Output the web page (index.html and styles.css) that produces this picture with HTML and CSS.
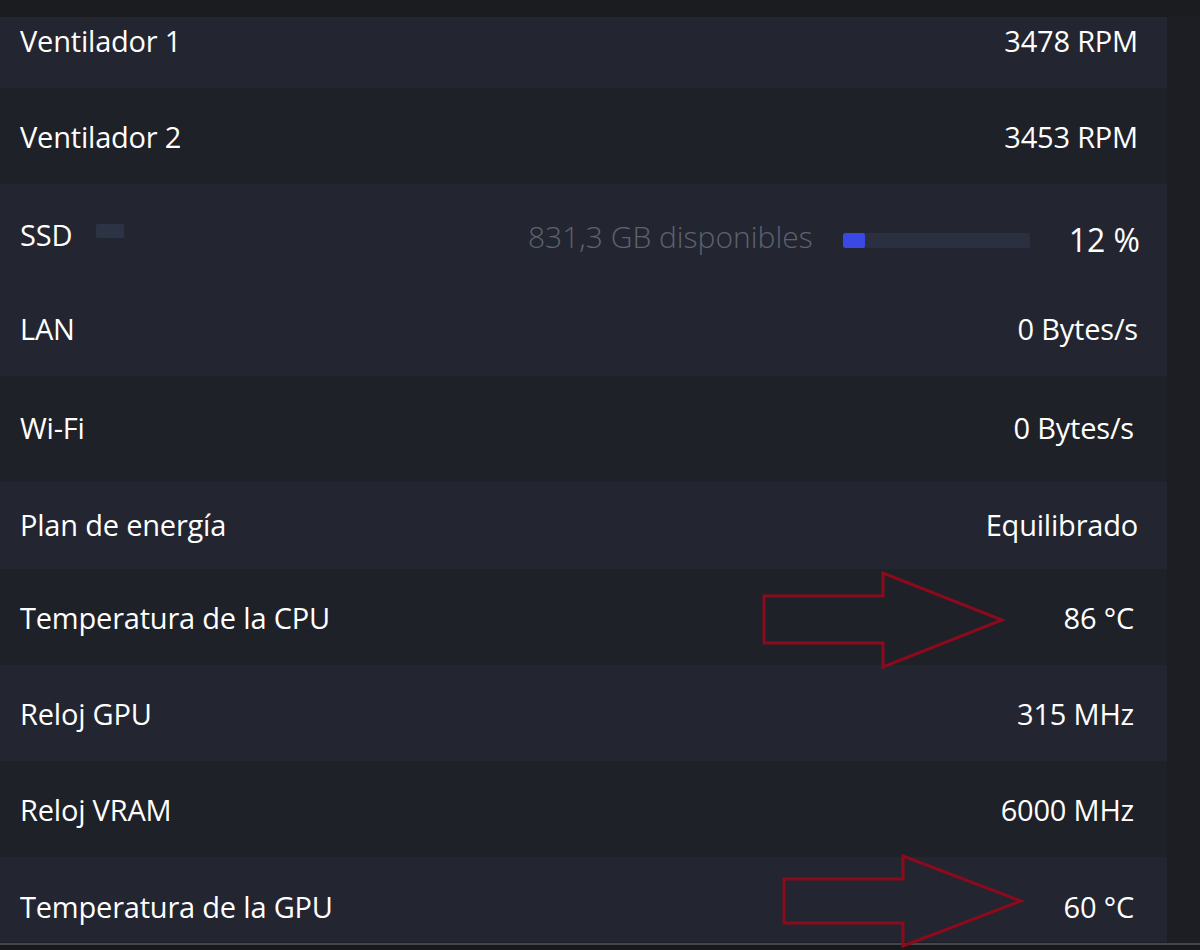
FILE: index.html
```html
<!DOCTYPE html>
<html lang="es">
<head>
    <meta charset="UTF-8">
    <meta name="viewport" content="width=device-width, initial-scale=1.0">
    <title>Monitor del sistema</title>
    <link rel="stylesheet" href="styles.css">
</head>
<body>
    <div class="screen">
        <div class="topbar"></div>

        <div class="viewport">
            <div class="panel">
                <div class="stat-list">
                    <div class="stat-row light">
                        <span class="stat-label">Ventilador 1</span>
                        <span class="stat-value">3478 RPM</span>
                    </div>
                    <div class="stat-row dark">
                        <span class="stat-label">Ventilador 2</span>
                        <span class="stat-value">3453 RPM</span>
                    </div>
                    <div class="stat-row light">
                        <div class="disk-label">
                            <span class="stat-label">SSD</span>
                            <span class="disk-chip"></span>
                        </div>
                        <div class="disk-usage">
                            <span class="disk-free">831,3 GB disponibles</span>
                            <div class="usage-bar">
                                <div class="usage-fill" style="width: 12%;"></div>
                            </div>
                            <span class="usage-percent">12 %</span>
                        </div>
                    </div>
                    <div class="stat-row light">
                        <span class="stat-label">LAN</span>
                        <span class="stat-value">0 Bytes/s</span>
                    </div>
                    <div class="stat-row dark tall">
                        <span class="stat-label">Wi-Fi</span>
                        <span class="stat-value inset">0 Bytes/s</span>
                    </div>
                    <div class="stat-row light short">
                        <span class="stat-label">Plan de energía</span>
                        <span class="stat-value">Equilibrado</span>
                    </div>
                    <div class="stat-row dark">
                        <span class="stat-label">Temperatura de la CPU</span>
                        <span class="stat-value inset">86 °C</span>
                    </div>
                    <div class="stat-row light">
                        <span class="stat-label">Reloj GPU</span>
                        <span class="stat-value inset">315 MHz</span>
                    </div>
                    <div class="stat-row dark">
                        <span class="stat-label">Reloj VRAM</span>
                        <span class="stat-value inset">6000 MHz</span>
                    </div>
                    <div class="stat-row light last">
                        <span class="stat-label">Temperatura de la GPU</span>
                        <span class="stat-value inset">60 °C</span>
                    </div>
                </div>
                <div class="panel-gutter"></div>
            </div>
        </div>

        <div class="bottombar"></div>

        <!-- annotation arrows drawn over the screenshot -->
        <svg class="annotations" width="1200" height="950" viewBox="0 0 1200 950">
            <polygon points="764,596 883,596 883,573 1002,620 883,667 883,643 764,643" />
            <polygon points="784,879 903,879 903,856 1021,901 903,946 903,923 784,923" />
        </svg>
    </div>
</body>
</html>
```

FILE: styles.css
```css
:root {
    --row-light: #232631;
    --row-dark: #1f2129;
    --gutter: #1c1e23;
    --topbar: #1b1c20;
    --text: #ffffff;
    --text-muted: #5c626e;
    --bar-track: #2a3040;
    --bar-fill: #3a48e4;
    --arrow: #8b0a1c;
}

* {
    margin: 0;
    padding: 0;
    box-sizing: border-box;
}

body {
    background-color: var(--gutter);
    font-family: "Open Sans", "Noto Sans", sans-serif;
    color: var(--text);
}

.screen {
    position: relative;
    width: 1200px;
    height: 950px;
    display: flex;
    flex-direction: column;
    overflow: hidden;
}

.topbar {
    height: 17px;
    background: var(--topbar);
}

.viewport {
    height: 926px;
    overflow: hidden;
}

/* list is scrolled a little, so the first row is cut */
.panel {
    display: flex;
    margin-top: -25px;
}

.stat-list {
    width: 1167px;
    display: flex;
    flex-direction: column;
}

.panel-gutter {
    flex: 1;
    background: var(--gutter);
}

.stat-row {
    height: 96px;
    padding: 0 29px 0 20px;
    display: flex;
    justify-content: space-between;
    align-items: center;
}

.stat-row.light { background: var(--row-light); }
.stat-row.dark { background: var(--row-dark); }
.stat-row.tall { height: 106px; padding-top: 0; padding-bottom: 4px; }
.stat-row.short { height: 87px; padding-bottom: 2px; }
.stat-row.last { height: 85px; padding-top: 14px; }

.stat-label,
.stat-value {
    font-size: 29px;
    letter-spacing: -0.2px;
    line-height: 1;
}

.stat-value.inset {
    margin-right: 4px;
}

.disk-label {
    display: flex;
    align-items: flex-start;
    gap: 24px;
    margin-top: 4px;
}

.disk-chip {
    width: 28px;
    height: 14px;
    margin-top: 4px;
    border-radius: 2px;
    background: #2b3345;
}

.disk-usage {
    display: flex;
    align-items: center;
    margin-top: 16px;
    margin-right: -2px;
}

.disk-free {
    font-size: 30px;
    font-weight: 300;
    color: var(--text-muted);
    margin-right: 30px;
    margin-top: -8px;
}

.usage-bar {
    width: 187px;
    height: 15px;
    background: var(--bar-track);
    border-radius: 2px;
    overflow: hidden;
    margin-right: 39px;
}

.usage-fill {
    height: 100%;
    background: var(--bar-fill);
    border-radius: 2px;
}

.usage-percent {
    font-size: 32px;
    line-height: 1;
}

.bottombar {
    flex: 1;
    border-top: 2px solid #44454a;
    background: #17181b;
}

.annotations {
    position: absolute;
    top: 0;
    left: 0;
    pointer-events: none;
}

.annotations polygon {
    fill: none;
    stroke: var(--arrow);
    stroke-width: 3;
}
```
